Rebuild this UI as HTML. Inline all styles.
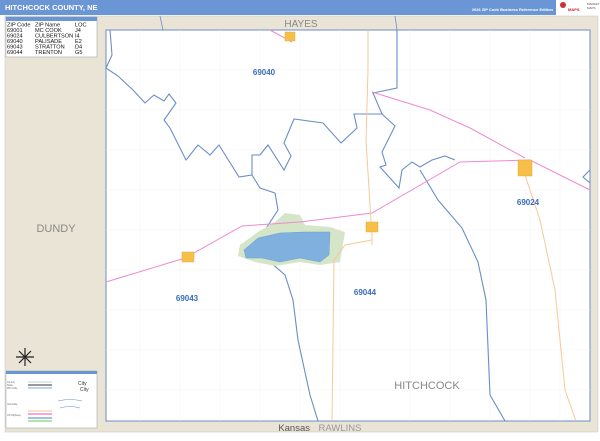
<!DOCTYPE html>
<html><head><meta charset="utf-8"><style>
body{margin:0;width:600px;height:436px;overflow:hidden;background:#fff;font-family:"Liberation Sans",sans-serif}
</style></head><body>
<svg width="600" height="436" viewBox="0 0 600 436" xmlns="http://www.w3.org/2000/svg" font-family="Liberation Sans, sans-serif">
<rect x="0" y="0" width="600" height="436" fill="#fff"/>
<rect x="0" y="0" width="600" height="15" fill="#6a96d6"/>
<text x="5" y="10" font-size="7.5" font-weight="bold" fill="#fff">HITCHCOCK COUNTY, NE</text>
<text x="553" y="11" font-size="4" font-weight="bold" fill="#fff" text-anchor="end">2026 ZIP Code Business Reference Edition</text>
<rect x="556" y="0" width="44" height="15" fill="#fff"/>
<circle cx="563" cy="5" r="3" fill="#c33"/><text x="568" y="11" font-size="4" fill="#c22" font-weight="bold">MAPS</text>
<text x="587" y="5" font-size="3" fill="#555">MARKET</text><text x="587" y="9" font-size="3" fill="#555">MAPS</text>
<rect x="5" y="16" width="593" height="416" fill="#e9e4d5" stroke="#ccc" stroke-width="0.6"/>
<rect x="106" y="30" width="484" height="391" fill="#fff" stroke="#6a8ec8" stroke-width="1"/>
<g stroke="#f2f2f2" stroke-width="0.5" fill="none">
<path d="M106 70H590M106 110H590M106 150H590M106 190H590M106 230H590M106 270H590M106 310H590M106 350H590M106 390H590"/>
<path d="M140 30V421M180 30V421M220 30V421M260 30V421M300 30V421M340 30V421M410 30V421M450 30V421M490 30V421M530 30V421M560 30V421"/>
</g>
<path d="M160 16L163 30M395 16L397 30" stroke="#6a8ec8" stroke-width="0.8" fill="none"/>
<g stroke="#6a8ec8" stroke-width="1.1" fill="none">
<path d="M110 30L112 55L106 68M106 68L118 76L133 90L145 103L154 95L164 101L169 94L176 103L164 120L170 128L186 160L198 145L210 155L219 145L239 177L252 175L260 188L275 193L278 210L265 230L270 245L262 255L285 275L293 300L298 340L310 395L318 421"/>
<path d="M252 175L252 155L260 155L268 145L284 170L291 156L284 143L294 119L323 123L341 143L357 128L354 114L382 114L373 93L397 88L397 30"/>
<path d="M382 114L395 126L382 152L386 165L380 167L399 188L402 170L412 162L420 167L432 160L445 156L455 160"/>
<path d="M420 170L438 200L462 228L478 262L486 300L490 395L505 421"/>
<path d="M590 170L583 177L590 183"/>
</g>
<path d="M285 213L300 215L305 225L330 227L345 232L340 262L320 265L300 262L275 266L255 262L238 256L240 245L258 232L275 222Z" fill="#d5e5c8"/>
<path d="M244 250L258 238L280 233L305 232L330 232L329 255L320 262L300 258L280 262L262 258L246 258Z" fill="#7fb0de" stroke="#6a9fd0" stroke-width="0.5"/>
<g fill="none" stroke-width="1">
<path d="M106 282L185 258L242 226L300 222L372 213L460 162L530 160L590 190" stroke="#f08ad0"/>
<path d="M372 92L430 110L470 128L525 158" stroke="#f08ad0"/>
<path d="M270 30L292 42" stroke="#f08ad0"/>
<path d="M368 30L368 70L366 140L370 205L372 235L372 245" stroke="#f8c898"/>
<path d="M372 240L345 245L334 260L332 421" stroke="#f8c898"/>
<path d="M525 175L540 220L555 290L565 390L576 421" stroke="#f8c898"/>
</g>
<g fill="#f6c048" stroke="#d8a030" stroke-width="0.4">
<rect x="285" y="32" width="10" height="9"/>
<rect x="182" y="252" width="12" height="10"/>
<rect x="366" y="222" width="12" height="10"/>
<rect x="518" y="160" width="14" height="16"/>
</g>
<g fill="#3a6cb8" font-weight="bold" font-size="8" text-anchor="middle">
<text x="264" y="75">69040</text>
<text x="528" y="205">69024</text>
<text x="187" y="301">69043</text>
<text x="365" y="295">69044</text>
</g>
<g fill="#888" font-size="11" text-anchor="middle">
<text x="56" y="232">DUNDY</text>
<text x="301" y="27" font-size="10">HAYES</text>
<text x="427" y="389">HITCHCOCK</text>
<text x="310" y="431" font-size="9.5" text-anchor="end" fill="#555">Kansas</text>
<text x="340" y="431" font-size="9.5" fill="#999">RAWLINS</text>
</g>
<rect x="6" y="17" width="91" height="40" fill="#fff" stroke="#999" stroke-width="0.5"/>
<rect x="6" y="17" width="91" height="4" fill="#6a96d6"/>
<g font-size="5.6" fill="#111">
<text x="7" y="26.5">ZIP Code</text><text x="35" y="26.5">ZIP Name</text><text x="75" y="26.5">LOC</text>
<text x="7" y="32">69001</text><text x="35" y="32">MC COOK</text><text x="75" y="32">J4</text>
<text x="7" y="37.5">69024</text><text x="35" y="37.5">CULBERTSON</text><text x="75" y="37.5">I4</text>
<text x="7" y="43">69040</text><text x="35" y="43">PALISADE</text><text x="75" y="43">E2</text>
<text x="7" y="48.5">69043</text><text x="35" y="48.5">STRATTON</text><text x="75" y="48.5">D4</text>
<text x="7" y="54">69044</text><text x="35" y="54">TRENTON</text><text x="75" y="54">G5</text>
</g>
<g stroke="#222" stroke-width="1.2"><path d="M25 348V366M16 357H34M19 351L31 363M31 351L19 363"/></g>
<rect x="6" y="371" width="91" height="57" fill="#fff" stroke="#999" stroke-width="0.5"/>
<rect x="6" y="371" width="91" height="3" fill="#6a96d6"/>
<g stroke-width="1.5">
<path d="M28 382H52" stroke="#ddd"/><path d="M28 385H52" stroke="#999" stroke-width="2"/>
<path d="M28 388H52" stroke="#a8c8ea"/>
<path d="M28 411H52" stroke="#f8d8b8"/><path d="M28 414H52" stroke="#f08ad0"/>
<path d="M28 418H52" stroke="#7fb0de"/><path d="M28 421H52" stroke="#9ed890"/>
</g>
<g font-size="2.5" fill="#666"><text x="7" y="383">County</text><text x="7" y="386">State</text><text x="7" y="389">ZIP Code</text><text x="7" y="405">Interstate</text><text x="7" y="416">US Highway</text></g>
<text x="78" y="385" font-size="5" fill="#333">City</text>
<text x="80" y="391" font-size="5" fill="#333">City</text>
<path d="M58 401Q70 398 82 401M60 408Q70 405 80 408" stroke="#6a8ec8" stroke-width="0.6" fill="none"/>
</svg>
</body></html>
